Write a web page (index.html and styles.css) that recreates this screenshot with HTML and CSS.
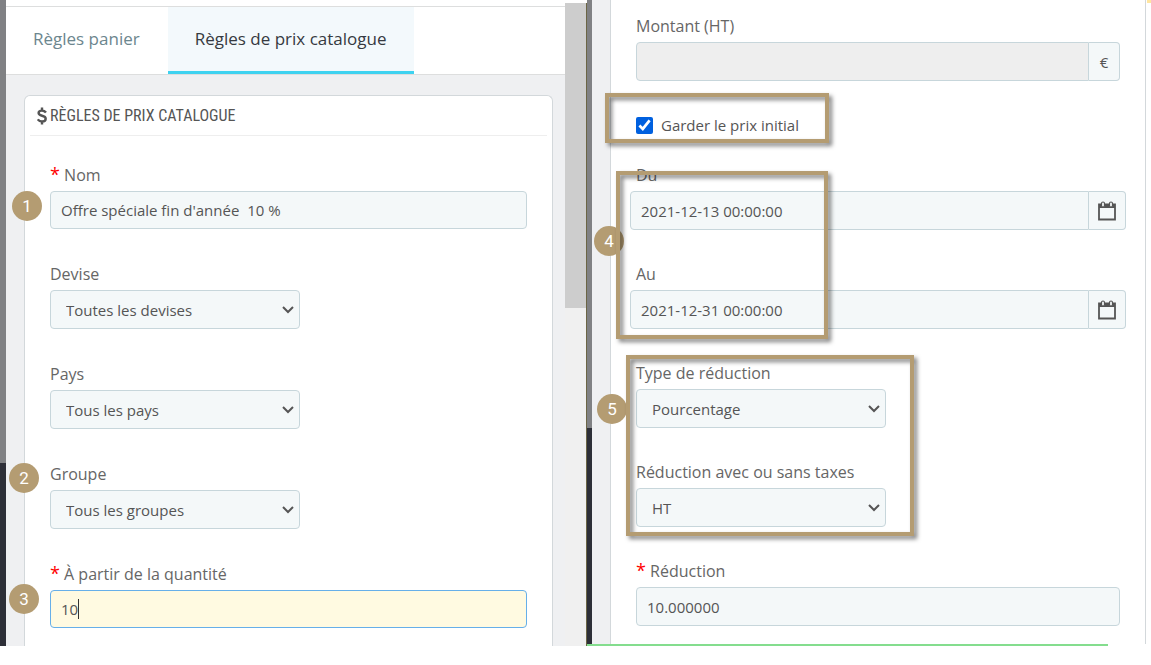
FILE: index.html
```html
<!DOCTYPE html>
<html lang="fr">
<head>
<meta charset="utf-8">
<title>Règles de prix catalogue</title>
<link rel="stylesheet" href="styles.css">
</head>
<body>

<div class="workspace">

  <div class="pane pane-left">
    <div class="strip strip-left"></div>
    <main class="content">
      <div class="topbar"></div>
      <nav class="tabs">
        <a class="tab" href="#panier">Règles panier</a>
        <a class="tab active" href="#catalogue">Règles de prix catalogue</a>
      </nav>

      <form class="panel">
        <h1 class="panel-heading">
          <svg class="dollar" viewBox="0 0 10 18" aria-hidden="true">
            <path d="M9 5.600C8 4.300 6.700 3.600 5 3.600C3 3.600 1.600 4.600 1.600 6.100C1.600 9.800 8.700 7.700 8.700 11.700C8.700 13.400 7.200 14.500 5 14.500C3.200 14.500 1.700 13.700 .8 12.300M5 0.500V4M5 14V17.500" fill="none" stroke="#555" stroke-width="2.400"/>
          </svg>
          <span>RÈGLES DE PRIX CATALOGUE</span>
        </h1>

        <div class="fields">
          <div class="field">
            <label for="nom"><span class="required">*</span> Nom</label>
            <input class="control" type="text" id="nom" value="Offre spéciale fin d'année  10 %">
          </div>
          <div class="field">
            <label for="devise">Devise</label>
            <div class="select-wrap">
              <select class="control" id="devise"><option>Toutes les devises</option></select>
              <svg class="chevron" viewBox="0 0 12 8" aria-hidden="true"><path d="M1 1L6 6L11 1"/></svg>
            </div>
          </div>
          <div class="field">
            <label for="pays">Pays</label>
            <div class="select-wrap">
              <select class="control" id="pays"><option>Tous les pays</option></select>
              <svg class="chevron" viewBox="0 0 12 8" aria-hidden="true"><path d="M1 1L6 6L11 1"/></svg>
            </div>
          </div>
          <div class="field">
            <label for="groupe">Groupe</label>
            <div class="select-wrap">
              <select class="control" id="groupe"><option>Tous les groupes</option></select>
              <svg class="chevron" viewBox="0 0 12 8" aria-hidden="true"><path d="M1 1L6 6L11 1"/></svg>
            </div>
          </div>
          <div class="field">
            <label for="quantite"><span class="required">*</span> À partir de la quantité</label>
            <div class="input-wrap">
              <input class="control editing" type="text" id="quantite" value="10">
              <span class="caret"></span>
            </div>
          </div>
        </div>
      </form>
    </main>
    <div class="scrollbar"><div class="thumb"></div></div>

    <span class="badge badge-1">1</span>
    <span class="badge badge-2">2</span>
    <span class="badge badge-3">3</span>
  </div>

  <div class="pane pane-right">
    <div class="strip strip-right"></div>
    <form class="details">
      <div class="details-panel">
        <div class="field">
          <label for="montant">Montant (HT)</label>
          <div class="input-group">
            <input class="control" type="text" id="montant" disabled>
            <span class="addon">€</span>
          </div>
        </div>

        <div class="check">
          <input type="checkbox" id="garder" checked>
          <label for="garder">Garder le prix initial</label>
        </div>

        <div class="field">
          <label for="du">Du</label>
          <div class="input-group wide">
            <input class="control" type="text" id="du" value="2021-12-13 00:00:00">
            <button class="addon calendar" type="button" aria-label="Calendrier">
              <svg viewBox="0 0 18 20" aria-hidden="true">
                <path d="M1 3.500H17V18.500H1Z" fill="none" stroke="#555" stroke-width="1.800"/>
                <path d="M1 3H17V7H1Z" fill="#555"/>
                <rect x="3.500" y="1" width="3" height="5" rx="1.500" fill="#f4f8f9" stroke="#555" stroke-width="1.200"/>
                <rect x="11.500" y="1" width="3" height="5" rx="1.500" fill="#f4f8f9" stroke="#555" stroke-width="1.200"/>
              </svg>
            </button>
          </div>
        </div>
        <div class="field">
          <label for="au">Au</label>
          <div class="input-group wide">
            <input class="control" type="text" id="au" value="2021-12-31 00:00:00">
            <button class="addon calendar" type="button" aria-label="Calendrier">
              <svg viewBox="0 0 18 20" aria-hidden="true">
                <path d="M1 3.500H17V18.500H1Z" fill="none" stroke="#555" stroke-width="1.800"/>
                <path d="M1 3H17V7H1Z" fill="#555"/>
                <rect x="3.500" y="1" width="3" height="5" rx="1.500" fill="#f4f8f9" stroke="#555" stroke-width="1.200"/>
                <rect x="11.500" y="1" width="3" height="5" rx="1.500" fill="#f4f8f9" stroke="#555" stroke-width="1.200"/>
              </svg>
            </button>
          </div>
        </div>
        <div class="field">
          <label for="type">Type de réduction</label>
          <div class="select-wrap">
            <select class="control" id="type"><option>Pourcentage</option></select>
            <svg class="chevron" viewBox="0 0 12 8" aria-hidden="true"><path d="M1 1L6 6L11 1"/></svg>
          </div>
        </div>
        <div class="field">
          <label for="taxes">Réduction avec ou sans taxes</label>
          <div class="select-wrap">
            <select class="control" id="taxes"><option>HT</option></select>
            <svg class="chevron" viewBox="0 0 12 8" aria-hidden="true"><path d="M1 1L6 6L11 1"/></svg>
          </div>
        </div>
        <div class="field">
          <label for="reduction"><span class="required">*</span> Réduction</label>
          <input class="control" type="text" id="reduction" value="10.000000">
        </div>
      </div>
      <div class="progress"></div>
    </form>

    <span class="corner"></span>
    <span class="badge badge-4">4</span>
    <span class="badge badge-5">5</span>
    <div class="frame frame-keep"></div>
    <div class="frame frame-dates"></div>
    <div class="frame frame-type"></div>
  </div>

</div>

</body>
</html>
```
FILE: styles.css
```css
* {
  box-sizing: border-box;
}

body {
  margin: 0;
  background: #fff;
  color: #666;
  font-family: "Open Sans", sans-serif;
  font-size: 16px;
}

.workspace {
  display: flex;
}

.pane {
  position: relative; /* badges and frames hang on the pane */
  display: flex;
  min-width: 0;
}

.pane-left {
  flex: 587;
}

.pane-right {
  flex: 564;
}

/* Dark menu edge of each window */
.strip {
  flex: none;
}

.strip-left {
  width: 6px;
  background: linear-gradient(#808184 463px, #2d2f38 463px);
}

.strip-right {
  width: 5px;
  background: linear-gradient(#808184 428px, #2d2f38 428px);
}

.content {
  flex: 1;
  min-width: 0;
  background: #eff0f2;
}

.topbar {
  height: 7px;
  background: #fff;
  border-bottom: 1px solid #dddede;
}

.tabs {
  display: flex;
  height: 68px;
  padding-right: 20px;
  background: #fff;
  border-bottom: 1px solid #dddede;
}

.tab {
  padding: 20px 28px 0 27px;
  border-bottom: 3px solid transparent;
  color: #6c868e;
  font-size: 17px;
  line-height: 24px;
  text-decoration: none;
  white-space: nowrap;
}

.tab.active {
  background: #f3f9fc;
  border-bottom-color: #3ed2f0;
  color: #363a41;
}

.panel {
  margin: 20px 12px 0 18px;
  padding: 0 5px 18px;
  background: #fff;
  border: 1px solid #d3d8db;
  border-bottom: 0;
  border-radius: 6px 6px 0 0;
}

.panel-heading {
  display: flex;
  align-items: center;
  gap: 3px;
  height: 40px;
  margin: 0;
  padding-left: 7px;
  border-bottom: 1px solid #eee;
  color: #555;
  font-family: "Roboto Condensed", Roboto, sans-serif;
  font-size: 16px;
  font-weight: 400;
  white-space: nowrap;
}

.dollar {
  width: 10px;
  height: 18px;
}

.fields {
  padding: 27px 20px 0;
}

.field {
  display: flex;
  flex-direction: column;
  align-items: flex-start;
}

.pane-left .field + .field {
  margin-top: 33px;
}

.pane-right .field + .field {
  margin-top: 32px;
}

.field label {
  height: 28px;
  line-height: 24px;
}

.required {
  color: #f00;
  font-size: 18px;
  line-height: 16px;
}

.control {
  width: 100%;
  height: 39px;
  padding: 0 10px;
  background-color: #f4f8f9;
  border: 1px solid #c7d6db;
  border-radius: 4px;
  color: #555;
  font-family: inherit;
  font-size: 15px;
}

.pane-left input.control {
  height: 38px;
}

.select-wrap {
  position: relative;
  width: 250px;
}

select.control {
  display: block;
  padding: 0 30px 0 15px;
  appearance: none;
}

.chevron {
  position: absolute;
  right: 6px;
  top: 16px;
  width: 12px;
  height: 8px;
  fill: none;
  stroke: #555;
  stroke-width: 2;
  pointer-events: none;
}

.control:disabled {
  background-color: #eee;
}

.control.editing {
  background-color: #fffae1;
  border-color: #66afe9;
}

.input-wrap {
  position: relative;
  width: 100%;
}

.input-wrap .control {
  display: block;
}

.caret {
  position: absolute;
  left: 28px;
  top: 9px;
  width: 1px;
  height: 20px;
  background: #333;
}

.scrollbar {
  flex: none;
  width: 22px;
  margin-top: 3px;
  background: #f0f0f0;
  border-right: 1px solid #6b6545;
}

.thumb {
  height: 305px;
  background: #cdcdcd;
}

/* Right window */
.details {
  flex: 1;
  min-width: 0;
  border-left: 18px solid #eff0f2;
}

.details-panel {
  margin-right: 5px;
  padding: 14px 25px 18px;
  border-left: 1px solid #d3d8db;
  border-right: 1px solid #d3d8db;
}

.input-group {
  display: flex;
  width: 100%;
}

.input-group.wide {
  width: auto;
  align-self: stretch;
  margin: 0 -6px;
}

.input-group .control {
  flex: 1;
  min-width: 0;
  border-radius: 4px 0 0 4px;
}

.addon {
  display: flex;
  flex: none;
  align-items: center;
  justify-content: center;
  width: 31px;
  padding: 0;
  background: #f4f8f9;
  border: 1px solid #c7d6db;
  border-left: 0;
  border-radius: 0 4px 4px 0;
  color: #555;
  font-size: 15px;
}

.calendar {
  width: 37px;
}

.calendar svg {
  width: 18px;
  height: 20px;
}

.check {
  display: flex;
  align-items: center;
  gap: 8px;
  height: 24px;
  margin: 32px 0 26px;
  color: #555;
  font-size: 15px;
}

.check input {
  width: 17px;
  height: 17px;
  margin: 0;
  accent-color: #0060df;
}

.progress {
  height: 2px;
  margin: 0 43px 0 -23px;
  background: #84dd8e;
}

.corner {
  position: absolute;
  top: 0;
  right: 0;
  width: 4px;
  height: 3px;
  background: #ffe6a0;
}

/* Annotations */
.badge {
  position: absolute;
  width: 30px;
  height: 30px;
  border-radius: 50%;
  background: #b49c72;
  color: #fff;
  font-family: Roboto, sans-serif;
  font-size: 17px;
  line-height: 30px;
  text-align: center;
}

.badge-1 { left: 12px; top: 191px; }
.badge-2 { left: 9px; top: 463px; }
.badge-3 { left: 9px; top: 584px; }
.badge-4 { left: 7px; top: 226px; }
.badge-5 { left: 10px; top: 394px; }

.frame {
  position: absolute;
  border: 4px solid #b49c72;
  filter: drop-shadow(3px 3px 2px rgba(0, 0, 0, 0.5));
  pointer-events: none;
}

.frame-keep {
  left: 18px;
  top: 93px;
  width: 224px;
  height: 50px;
}

.frame-dates {
  left: 29px;
  top: 171px;
  width: 212px;
  height: 168px;
}

.frame-type {
  left: 39px;
  top: 355px;
  width: 288px;
  height: 181px;
}
```
